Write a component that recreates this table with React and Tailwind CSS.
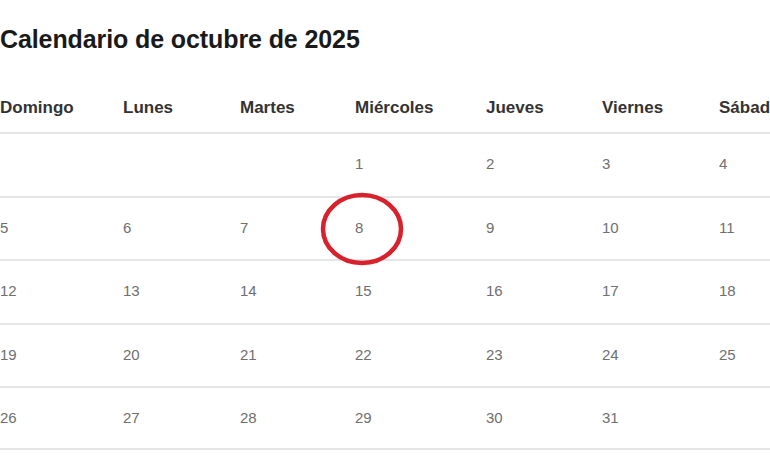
import React from 'react'

const days = ['Domingo', 'Lunes', 'Martes', 'Miércoles', 'Jueves', 'Viernes', 'Sábado']

const weeks = [
    ['', '', '', '1', '2', '3', '4'],
    ['5', '6', '7', '8', '9', '10', '11'],
    ['12', '13', '14', '15', '16', '17', '18'],
    ['19', '20', '21', '22', '23', '24', '25'],
    ['26', '27', '28', '29', '30', '31', ''],
]

const cols = 'grid grid-cols-[123px_117px_115px_131px_116px_117px_101px]'

export default function App() {
    return (
        <div className="w-[770px] h-[470px] overflow-hidden bg-white font-['Liberation_Sans',Arial,sans-serif]">
            <div className="w-[820px]">
                {/* Title */}
                <h1 className="pt-[24px] text-[25px] leading-[30px] font-bold text-[#1a1a1a] tracking-[-0.1px]">
                    Calendario de octubre de 2025
                </h1>

                {/* Weekday header */}
                <div className={`${cols} h-[78px] items-end pb-[14px]`}>
                    {days.map((d) => (
                        <div key={d} className="text-[17px] leading-[20px] font-bold text-[#333] whitespace-nowrap">
                            {d}
                        </div>
                    ))}
                </div>

                {/* Weeks */}
                {weeks.map((week, i) => (
                    <div key={i} className={`${cols} h-[63.6px] border-t-2 border-[#e6e6e6] items-center pb-[1px] ${i === weeks.length - 1 ? 'border-b-2' : ''}`}>
                        {week.map((n, j) => (
                            <div key={j} className="relative text-[15px] leading-[18px] text-[#6f6f6f]">
                                {n}
                                {n === '8' && (
                                    <svg className="absolute left-[-36px] top-[-28px] w-[86px] h-[76px] pointer-events-none" viewBox="0 0 86 76">
                                        <ellipse cx="43" cy="38" rx="39" ry="34" fill="none" stroke="#d7212c" strokeWidth="4.5" />
                                    </svg>
                                )}
                            </div>
                        ))}
                    </div>
                ))}
            </div>
        </div>
    )
}
